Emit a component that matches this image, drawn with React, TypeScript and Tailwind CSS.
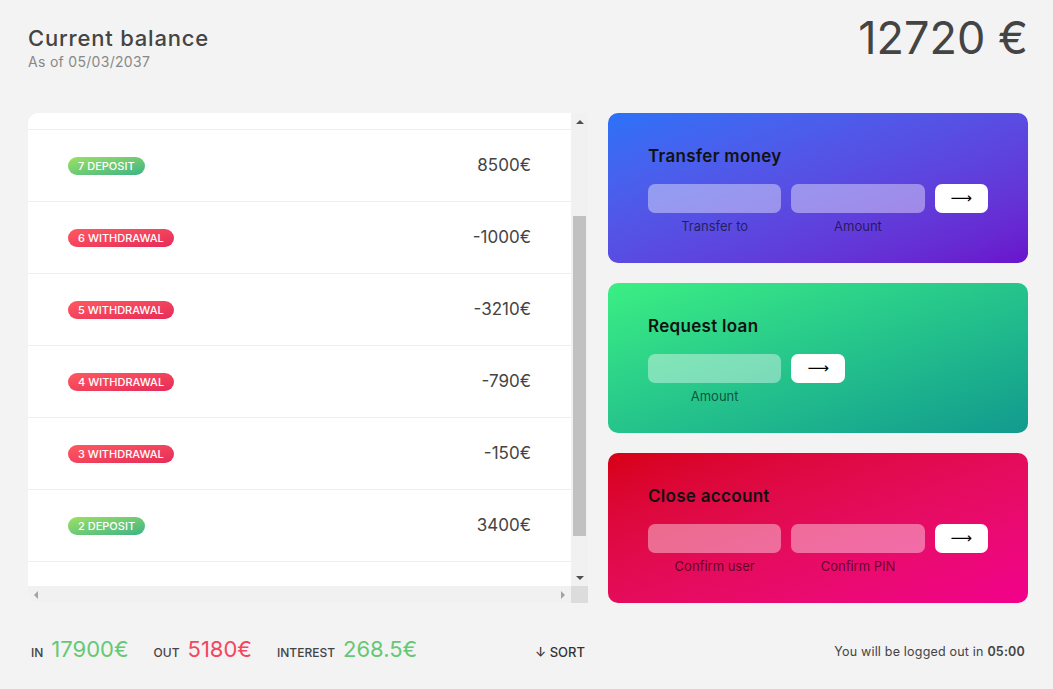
const movements = [
    { n: 9, type: "deposit", value: 4000 },
    { n: 8, type: "withdrawal", value: -30 },
    { n: 7, type: "deposit", value: 8500 },
    { n: 6, type: "withdrawal", value: -1000 },
    { n: 5, type: "withdrawal", value: -3210 },
    { n: 4, type: "withdrawal", value: -790 },
    { n: 3, type: "withdrawal", value: -150 },
    { n: 2, type: "deposit", value: 3400 },
    { n: 1, type: "deposit", value: 2000 },
];

function Tri({ dir, color }: { dir: "up" | "down" | "left" | "right"; color: string }) {
    const pts = {
        up: "0,4 8,4 4,0",
        down: "0,0 8,0 4,4",
        left: "4,0 4,8 0,4",
        right: "0,0 0,8 4,4",
    }[dir];
    const vert = dir === "up" || dir === "down";
    return <svg width={vert ? 8 : 4} height={vert ? 4 : 8} viewBox={vert ? "0 0 8 4" : "0 0 4 8"}>
        <polygon points={pts} fill={color} />
    </svg>
}

function Operation({ title, bg, labels, loan }: { title: string; bg: string; labels: string[]; loan?: boolean }) {
    const btn = "h-[29px] rounded-[7px] bg-white text-[15px] leading-none text-black font-['DejaVu_Sans',sans-serif]";
    return <div className={"rounded-[10px] px-[40px] pt-[33px] " + bg}>
        <h2 className="text-[17px] leading-[20px] font-semibold tracking-[0.3px] text-[#111] mb-[18px]">{title}</h2>
        <div className="grid grid-cols-[2.5fr_2.5fr_1fr] gap-x-[10px] gap-y-[5px]">
            {loan ? <>
                <div className="h-[29px] rounded-[7px] bg-white/40" />
                <button className={btn + " w-[54px]"}>⟶</button>
                <div />
                <p className="text-[13px] leading-[16px] text-center text-black/60">{labels[0]}</p>
            </> : <>
                <div className="h-[29px] rounded-[7px] bg-white/40" />
                <div className="h-[29px] rounded-[7px] bg-white/40" />
                <button className={btn}>⟶</button>
                <p className="text-[13px] leading-[16px] text-center text-black/60">{labels[0]}</p>
                <p className="text-[13px] leading-[16px] text-center text-black/60">{labels[1]}</p>
            </>}
        </div>
    </div>
}

export default function App() {
    return <div className="min-h-screen bg-[#f3f3f3] text-[#444] font-['Inter',sans-serif]">
        <main className="ml-[28px] w-[1000px]">
            <div className="flex justify-between h-[113px]">
                <div className="pt-[25px]">
                    <p className="text-[22px] leading-[26px] font-medium tracking-[0.8px]">Current balance</p>
                    <p className="text-[14px] leading-[17px] mt-[2px] text-[#888] tracking-[0.3px]">As of <span>05/03/2037</span></p>
                </div>
                <p className="text-[45px] leading-[45px] pt-[15px]">12720 €</p>
            </div>

            <div className="grid grid-cols-[4fr_3fr] grid-rows-[150px_150px_150px] gap-[20px]">
                {/* movements, scrolled part way down */}
                <div className="row-span-3 bg-white rounded-l-[10px] overflow-hidden flex flex-col">
                    <div className="flex flex-1 min-h-0">
                        <div className="flex-1 overflow-hidden">
                            <div className="-mt-[127px]">
                                {movements.map(m => (
                                    <div key={m.n} className="h-[72px] flex items-center px-[40px] border-b border-[#eee]">
                                        <span className={"text-[11px] leading-[16px] font-medium uppercase text-white px-[10px] py-[1px] rounded-full bg-linear-to-tl " + (m.type === "deposit" ? "from-[#39b385] to-[#9be15d]" : "from-[#e52a5a] to-[#ff585f]")}>
                                            {m.n} {m.type}
                                        </span>
                                        <span className="ml-auto text-[17px] text-[#444]">{m.value}€</span>
                                    </div>
                                ))}
                            </div>
                        </div>
                        <div className="w-[17px] bg-[#f1f1f1] flex flex-col">
                            <div className="h-[17px] flex items-center justify-center"><Tri dir="up" color="#505050" /></div>
                            <div className="flex-1 px-[2px]">
                                <div className="mt-[86px] h-[320px] bg-[#c1c1c1]" />
                            </div>
                            <div className="h-[17px] flex items-center justify-center"><Tri dir="down" color="#505050" /></div>
                        </div>
                    </div>
                    <div className="flex h-[17px]">
                        <div className="flex-1 bg-[#f1f1f1] flex items-center justify-between px-[6px]">
                            <Tri dir="left" color="#a3a3a3" />
                            <Tri dir="right" color="#a3a3a3" />
                        </div>
                        <div className="w-[17px] bg-[#dcdcdc]" />
                    </div>
                </div>
                <Operation title="Transfer money" bg="bg-linear-to-br from-[#2a72f8] to-[#6a12cc]" labels={["Transfer to", "Amount"]} />
                <Operation title="Request loan" bg="bg-linear-to-br from-[#3bef82] to-[#129a8e]" labels={["Amount"]} loan />
                <Operation title="Close account" bg="bg-linear-to-br from-[#d70012] to-[#f2008c]" labels={["Confirm user", "Confirm PIN"]} />
            </div>

            <div className="grid grid-cols-[4fr_3fr] gap-x-[20px] mt-[33px]">
                <div className="flex items-baseline px-[3px]">
                    <p className="text-[12px] font-medium uppercase mr-[8px]">In</p>
                    <p className="text-[22px] leading-[26px] text-[#66c873] mr-[25px]">17900€</p>
                    <p className="text-[12px] font-medium uppercase mr-[8px]">Out</p>
                    <p className="text-[22px] leading-[26px] text-[#f5465d] mr-[25px]">5180€</p>
                    <p className="text-[12px] font-medium uppercase mr-[8px]">Interest</p>
                    <p className="text-[22px] leading-[26px] text-[#66c873]">268.5€</p>
                    <button className="ml-auto text-[13px] font-medium text-[#333]">↓ SORT</button>
                </div>
                <p className="text-right text-[12.5px] pr-[3px] pt-[7px] tracking-[0.2px]">You will be logged out in <span className="font-semibold">05:00</span></p>
            </div>
        </main>
    </div>
}
